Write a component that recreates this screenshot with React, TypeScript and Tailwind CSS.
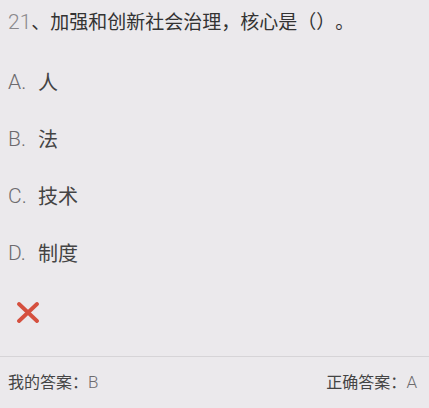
const options = [
  { key: "A", text: "人" },
  { key: "B", text: "法" },
  { key: "C", text: "技术" },
  { key: "D", text: "制度" },
];

const font = "font-['Roboto','Noto_Sans_CJK_SC',sans-serif]";

export default function App() {
  return (
    <div className={`w-[429px] h-[408px] bg-[#ebe9ec] flex flex-col [text-spacing-trim:space-all] ${font}`}>
      {/* Question */}
      <div className="px-2 pt-[9px] h-[35px] text-[19px] leading-[26px] text-[#333]">
        <span className="font-light text-[21px] text-[#8a888b]">21</span>
        <span>、加强和创新社会治理，核心是（）。</span>
      </div>

      {/* Options */}
      <div className="mt-[19px] flex flex-col">
        {options.map((o) => (
          <div key={o.key} className="h-[57px] px-2 flex items-center text-[20px]">
            <span className="font-light text-[21px] text-[#6d6b6e] w-[30px]">{o.key}.</span>
            <span className="text-[#444]">{o.text}</span>
          </div>
        ))}
      </div>

      {/* Result mark */}
      <div className="h-[74px] px-4 pt-[20px]">
        <svg width="24" height="21" viewBox="0 0 24 21">
          <path d="M3 2 L21 19 M21 2 L3 19" stroke="#d5503f" strokeWidth="3.8" strokeLinecap="round" />
        </svg>
      </div>

      {/* Footer */}
      <div className="flex-1 border-t border-[#d6d4d7] px-2 pr-3 flex items-center justify-between text-[16px] text-[#444]">
        <span>
          我的答案：<span className="font-light text-[17px] text-[#6d6b6e]">B</span>
        </span>
        <span>
          正确答案：<span className="font-light text-[17px] text-[#6d6b6e]">A</span>
        </span>
      </div>
    </div>
  );
}
